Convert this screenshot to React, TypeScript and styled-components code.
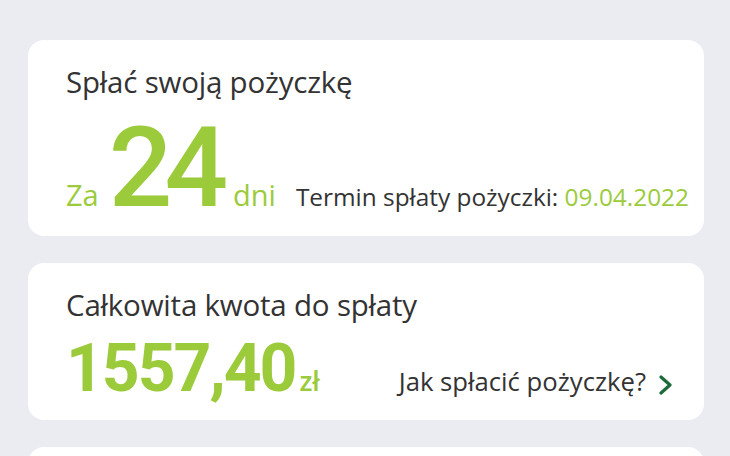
import styled, { createGlobalStyle } from "styled-components";

const GlobalStyle = createGlobalStyle`
  html, body {
    margin: 0;
    padding: 0;
    background: #ebecf1;
    font-family: "Open Sans", "Noto Sans", sans-serif;
  }
`;

const Page = styled.div`
  display: flex;
  flex-direction: column;
  gap: 27px;
  padding: 40px 26px 0 28px;
  height: 456px;
  box-sizing: border-box;
  overflow: hidden;
`;

const Card = styled.div<{ $height: number }>`
  background: #fff;
  border-radius: 16px;
  height: ${({ $height }) => $height}px;
  flex-shrink: 0;
  box-sizing: border-box;
  padding: 23px 14px 0 38px;
  display: flex;
  flex-direction: column;
`;

const Title = styled.div`
  color: #333;
  font-size: 29.5px;
  line-height: 38px;
  letter-spacing: -0.2px;
`;

const Row = styled.div<{ $mt: number }>`
  display: flex;
  align-items: baseline;
  white-space: nowrap;
  margin-top: ${({ $mt }) => $mt}px;
`;

const Green = styled.span<{ $size: number; $weight?: number; $ls?: number }>`
  color: #9bcb3b;
  font-size: ${({ $size }) => $size}px;
  font-weight: ${({ $weight }) => $weight ?? 400};
  letter-spacing: ${({ $ls }) => $ls ?? 0}px;
  line-height: 1;
`;

const Big = styled(Green)`
  font-family: Roboto, "Open Sans", sans-serif;
  margin: 0 13px 0 10px;
  line-height: 0.8;
`;

const Amount = styled(Green)`
  font-family: Roboto, "Open Sans", sans-serif;
`;

const Unit = styled(Green)`
  margin-left: 4px;
`;

const DueText = styled.span`
  color: #333;
  font-size: 24.4px;
  margin-left: 20px;
  line-height: 1;
`;

const Link = styled.a`
  margin-left: auto;
  margin-right: 16px;
  display: flex;
  align-items: baseline;
  gap: 12px;
  color: #333;
  font-size: 25.7px;
  text-decoration: none;
`;

const Chevron = () => (
  <svg width="16" height="20" viewBox="0 0 16 20" style={{ alignSelf: "center", marginTop: 6 }}>
    <path d="M3 2 L12 10 L3 18" fill="none" stroke="#1d6b3a" strokeWidth="3.2" strokeLinecap="round" strokeLinejoin="round" />
  </svg>
);

export default function App() {
  return (
    <>
      <GlobalStyle />
      <Page>
        <Card $height={196}>
          <Title>Spłać swoją pożyczkę</Title>
          <Row $mt={22}>
            <Green $size={29}>Za</Green>
            <Big $size={112} $weight={500} $ls={-8}>24</Big>
            <Green $size={29}>dni</Green>
            <DueText>
              Termin spłaty pożyczki: <Green $size={24.4}>09.04.2022</Green>
            </DueText>
          </Row>
        </Card>
        <Card $height={157}>
          <Title>Całkowita kwota do spłaty</Title>
          <Row $mt={12}>
            <Amount $size={66} $weight={700} $ls={-2}>1557,40</Amount>
            <Unit $size={27} $weight={600}>zł</Unit>
            <Link href="#">
              Jak spłacić pożyczkę?
              <Chevron />
            </Link>
          </Row>
        </Card>
        <Card $height={60} />
      </Page>
    </>
  );
}
